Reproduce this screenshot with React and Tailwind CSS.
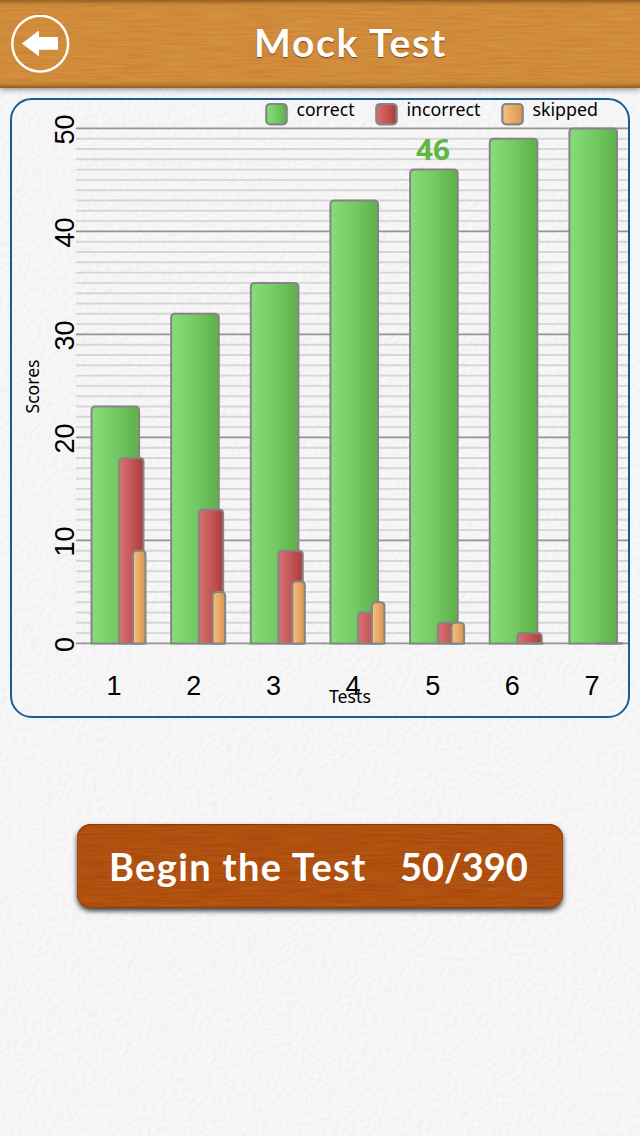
import React from "react";

const BASE = 545.4;
const UNIT = 10.3;
const STEP = 79.65;

const scores = [
  { correct: 23, incorrect: 18, skipped: 9 },
  { correct: 32, incorrect: 13, skipped: 5 },
  { correct: 35, incorrect: 9, skipped: 6 },
  { correct: 43, incorrect: 3, skipped: 4 },
  { correct: 46, incorrect: 2, skipped: 2 },
  { correct: 49, incorrect: 1, skipped: 0 },
  { correct: 50, incorrect: 0, skipped: 0 },
];

const legend = [
  { label: "correct", fill: "url(#green)", x: 256.3, textX: 286.5, width: 58 },
  { label: "incorrect", fill: "url(#red)", x: 366.3, textX: 396.5, width: 74 },
  { label: "skipped", fill: "url(#orange)", x: 492.3, textX: 522.5, width: 65.5 },
];

function Gradients() {
  return (
    <defs>
      <linearGradient id="green">
        <stop offset="0" stopColor="#87dd79" />
        <stop offset="0.5" stopColor="#75ca65" />
        <stop offset="0.9" stopColor="#62b44d" />
        <stop offset="1" stopColor="#60b24b" />
      </linearGradient>
      <linearGradient id="red">
        <stop offset="0" stopColor="#db7172" />
        <stop offset="1" stopColor="#ad3c3b" />
      </linearGradient>
      <linearGradient id="orange">
        <stop offset="0" stopColor="#f9c180" />
        <stop offset="1" stopColor="#d8944f" />
      </linearGradient>
    </defs>
  );
}

function Bar({ x, width, value, fill }) {
  if (value === 0) {
    return <path d={`M${x} ${BASE}h${width}`} stroke="#858585" strokeWidth="2" />;
  }
  const top = BASE - value * UNIT;
  const r = 4;
  return (
    <path
      d={`M${x} ${BASE}V${top + r}q0 ${-r} ${r} ${-r}H${x + width - r}q${r} 0 ${r} ${r}V${BASE}z`}
      fill={fill}
      stroke="#858585"
      strokeWidth="2"
    />
  );
}

function Chart() {
  const lines = Array.from({ length: 51 }, (_, i) => i);
  return (
    <svg className="block" width="616" height="616" viewBox="2 2 616 616">
      <Gradients />
      {lines.map((i) => (
        <path
          key={i}
          d={`M66 ${BASE - i * UNIT}H618`}
          stroke={i % 10 === 0 ? "#949494" : "#d6d6d6"}
          strokeWidth={i % 10 === 0 ? 1.8 : 1.9}
        />
      ))}
      {[0, 10, 20, 30, 40, 50].map((v) => (
        <text
          key={v}
          transform={`translate(64 ${BASE - v * UNIT + 1}) rotate(-90)`}
          textAnchor="middle"
          className="font-['Liberation_Sans',sans-serif] text-[27px]"
        >
          {v}
        </text>
      ))}
      {scores.map((s, i) => {
        const x = 81.5 + i * STEP;
        return (
          <g key={i}>
            <Bar x={x} width={47.6} value={s.correct} fill="url(#green)" />
            <Bar x={x + 27.8} width={24.2} value={s.incorrect} fill="url(#red)" />
            <Bar x={x + 41.5} width={12.5} value={s.skipped} fill="url(#orange)" />
            <text
              x={104.1 + i * STEP}
              y="597"
              textAnchor="middle"
              className="font-['Liberation_Sans',sans-serif] text-[27px]"
            >
              {i + 1}
            </text>
          </g>
        );
      })}
      <text x="406" y="62" textLength="34" lengthAdjust="spacingAndGlyphs" fill="#5fb548" className="font-['Open_Sans',sans-serif] text-[29px] font-bold">46</text>
      {legend.map((l) => (
        <g key={l.label}>
          <rect x={l.x} y="6" width="20.4" height="20.4" rx="3.8" fill={l.fill} stroke="#858585" strokeWidth="2.2" />
          <text x={l.textX} y="18.3" textLength={l.width} lengthAdjust="spacingAndGlyphs" className="font-['Noto_Sans',sans-serif] text-[18px]">{l.label}</text>
        </g>
      ))}
      <text x="319" y="605" textLength="42" lengthAdjust="spacingAndGlyphs" className="font-['Noto_Sans',sans-serif] text-[18px]">Tests</text>
      <text transform="translate(29 315.5) rotate(-90)" textLength="54" lengthAdjust="spacingAndGlyphs" className="font-['Noto_Sans',sans-serif] text-[18px]">Scores</text>
    </svg>
  );
}

function Paper() {
  return (
    <svg className="absolute inset-0 h-full w-full opacity-[0.12]" aria-hidden="true">
      <filter id="paper" x="0" y="0" width="100%" height="100%" colorInterpolationFilters="sRGB">
        <feTurbulence type="fractalNoise" baseFrequency="0.2" numOctaves="2" seed="4" result="n" />
        <feDiffuseLighting in="n" surfaceScale="0.55" diffuseConstant="1.36" lightingColor="#f8f8f8">
          <feDistantLight azimuth="225" elevation="46" />
        </feDiffuseLighting>
      </filter>
      <rect width="100%" height="100%" filter="url(#paper)" />
    </svg>
  );
}

function Grain({ id, matrix }) {
  return (
    <svg className="absolute inset-0 h-full w-full" aria-hidden="true">
      <filter id={id} x="0" y="0" width="100%" height="100%" colorInterpolationFilters="sRGB">
        <feTurbulence type="fractalNoise" baseFrequency="0.025 0.5" numOctaves="3" seed="8" />
        <feColorMatrix values={matrix} />
      </filter>
      <rect width="100%" height="100%" filter={`url(#${id})`} />
    </svg>
  );
}

export default function App() {
  return (
    <div className="relative isolate flex h-[1136px] w-[640px] flex-col overflow-hidden bg-[#f6f6f6] text-black">
      <div className="absolute inset-0 -z-10">
        <Paper />
      </div>

      <header className="relative isolate flex h-[88px] shrink-0 items-center bg-[#d18c3b] pl-[11px] shadow-[0_1px_6px_rgba(0,0,0,0.5)]">
        <div className="absolute inset-0 -z-10 overflow-hidden">
          <Grain id="lightGrain" matrix="0.04 0 0 0 0.795  0.12 0 0 0 0.485  0.04 0 0 0 0.21  0 0 0 0 1" />
          <div className="absolute -inset-x-3 inset-y-0 shadow-[inset_0_2px_4px_rgba(90,50,10,0.5),inset_0_-2px_5px_rgba(90,50,10,0.6)]" />
        </div>
        <button aria-label="Back" className="shrink-0">
          <svg width="59" height="59" viewBox="0 0 59 59" fill="none">
            <circle cx="29.2" cy="28.7" r="27.9" stroke="white" strokeWidth="2.4" />
            <path d="M10.8 28.5L28 15.5V22h19v12.7H28v6.5z" fill="white" />
          </svg>
        </button>
        <h1 className="-mt-[5px] ml-[184px] whitespace-nowrap font-['Lato',sans-serif] text-[39px] font-bold leading-[48px] tracking-[1.7px] text-white [text-shadow:0_1px_1px_rgba(90,40,0,0.75)]">
          Mock Test
        </h1>
      </header>

      <main className="flex flex-col items-center pt-[10px]">
        <section className="h-[620px] w-[620px] rounded-[22px] border-2 border-[#20598e]">
          <Chart />
        </section>
        <button className="relative isolate mt-[106px] flex h-[84px] w-[486px] items-center rounded-[14px] bg-[#b15011] pl-[32px] font-['Lato',sans-serif] text-[38px] font-bold leading-[48px] text-white shadow-[0_3px_5px_rgba(0,0,0,0.75)]">
          <div className="absolute inset-0 -z-10 overflow-hidden rounded-[14px]">
            <Grain id="darkGrain" matrix="0.06 0 0 0 0.655  0.11 0 0 0 0.26  0.02 0 0 0 0.05  0 0 0 0 1" />
            <div className="absolute inset-0 rounded-[14px] shadow-[inset_0_1px_1px_rgba(110,40,0,0.6),inset_0_-1px_1px_rgba(110,40,0,0.5)]" />
          </div>
          <span className="w-[291px] whitespace-nowrap text-left tracking-[1.35px]">Begin the Test</span>
          <span className="whitespace-nowrap">50/390</span>
        </button>
      </main>
    </div>
  );
}
